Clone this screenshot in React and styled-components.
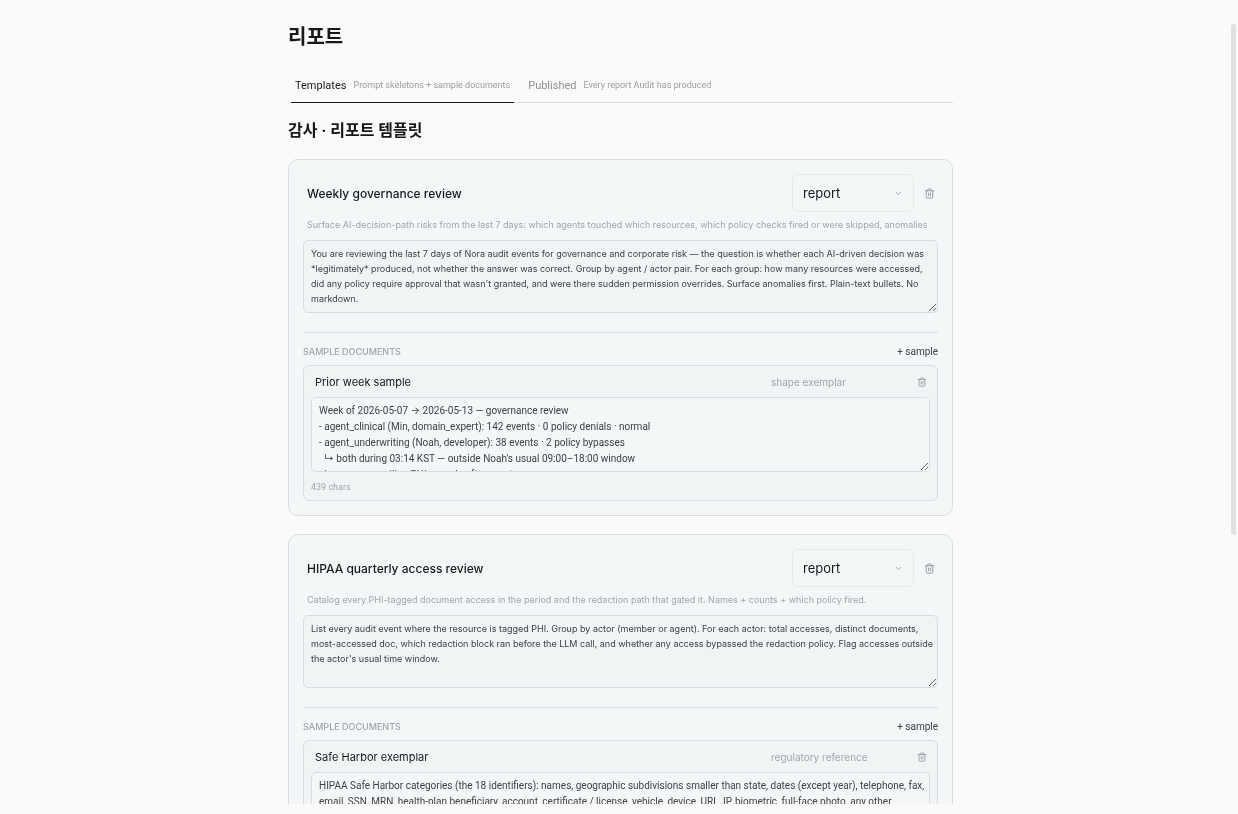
import React from 'react';
import styled, { createGlobalStyle } from 'styled-components';
import { Trash2, ChevronDown } from 'lucide-react';

const ink = '#18181b';
const muted = '#a3a5a8';
const line = '#dadddf';
const compactFont = 'Roboto, Inter, "Noto Sans CJK KR", sans-serif';

const GlobalStyle = createGlobalStyle`
* {
    box-sizing: border-box;
}
body {
    margin: 0;
    background: #fafafa;
    color: ${ink};
    font-family: Inter, "Noto Sans CJK KR", sans-serif;
}
button, input, select, textarea {
    font-family: inherit;
    color: inherit;
}
`;

const Viewport = styled.div`
height: 100vh;
padding-bottom: 10px;
`;

const Scroller = styled.main`
height: 100%;
overflow-y: auto;
scrollbar-width: none;
padding: 24px 16px 0 19px;
`;

const ScrollThumb = styled.div`
position: fixed;
top: 24px;
right: 2px;
width: 5px;
height: calc(63vh - 2px);
border-radius: 3px;
background: #e0e0e0;
`;

const Column = styled.div`
max-width: 665px;
margin: 0 auto;
`;

const PageTitle = styled.h1`
margin: 0;
font-family: ${compactFont};
font-size: 20px;
line-height: 26px;
font-weight: 700;
`;

const Tabs = styled.nav`
display: flex;
gap: 10px;
margin: 18px 0 0 3px;
border-bottom: 1px solid ${line};
`;

const Tab = styled.button`
display: flex;
align-items: center;
gap: 7px;
height: 35px;
margin-bottom: -1px;
padding: 0 4px;
border: 0;
border-bottom: 1px solid ${props => props.$active ? ink : 'transparent'};
background: none;
font-family: ${compactFont};
font-size: 11px;
color: ${props => props.$active ? ink : '#8f9194'};
`;

const TabHint = styled.span`
font-size: 9px;
color: #9b9da0;
`;

const SectionTitle = styled.h2`
margin: 16px 0;
font-family: ${compactFont};
font-size: 16px;
line-height: 24px;
font-weight: 700;
`;

const Card = styled.article`
margin-bottom: 18px;
padding: 14px;
border: 1px solid ${line};
border-radius: 10px;
background: #f4f7f8;
`;

const CardHead = styled.header`
display: flex;
align-items: center;
height: 38px;
`;

const TitleInput = styled.input`
flex: 1;
min-width: 0;
padding: 0 4px;
border: 0;
background: none;
font-size: ${props => props.$small ? '11px' : '12px'};
font-weight: ${props => props.$small ? 400 : 500};
`;

const SelectWrap = styled.div`
position: relative;
width: 122px;
height: 38px;
`;

const KindSelect = styled.select`
appearance: none;
width: 100%;
height: 100%;
padding: 0 10px;
border: 1px solid #e6e9ea;
border-radius: 6px;
background: #f4f7f8;
font-size: 13px;
`;

const Chevron = styled(ChevronDown)`
position: absolute;
top: 15px;
right: 11px;
color: #8c8f92;
pointer-events: none;
`;

const IconButton = styled.button`
display: flex;
align-items: center;
justify-content: center;
width: ${props => props.$small ? '16px' : '18px'};
height: 20px;
margin-left: ${props => props.$small ? '0' : '6px'};
padding: 0;
border: 0;
background: none;
color: #94979a;
`;

const Description = styled.input`
display: block;
width: 100%;
height: 16px;
margin: 4px 0 8px;
padding: 0 4px;
border: 0;
background: none;
font-size: 9px;
color: ${muted};
`;

const TextBox = styled.textarea`
display: block;
width: 100%;
height: 73px;
padding: 5px 2px 5px 7px;
border: 1px solid ${line};
border-radius: 5px;
background: #f1f4f5;
font-size: 9px;
line-height: 15px;
color: #3f4144;
resize: vertical;
`;

const SampleText = styled(TextBox)`
height: 75px;
background: #f4f7f8;
font-family: ${compactFont};
font-size: 10px;
line-height: 16px;
`;

const SampleHead = styled.div`
display: flex;
align-items: center;
justify-content: space-between;
height: 33px;
margin-top: 19px;
padding-top: 5px;
border-top: 1px solid ${line};
`;

const SampleLabel = styled.h3`
margin: 0;
font-size: 9px;
font-weight: 500;
color: ${muted};
`;

const AddButton = styled.button`
padding: 0;
border: 0;
background: none;
font-family: ${compactFont};
font-size: 10px;
color: #3f4144;
`;

const SampleCard = styled.section`
padding: 7px;
border: 1px solid ${line};
border-radius: 6px;
background: #f1f4f5;
`;

const SampleRow = styled.div`
display: flex;
align-items: center;
height: 18px;
margin-bottom: 6px;
`;

const PurposeInput = styled.input`
width: 147px;
padding: 0 4px;
border: 0;
background: none;
font-size: 10px;
color: ${muted};
`;

const CharCount = styled.p`
margin: 9px 0 0;
font-family: ${compactFont};
font-size: 9px;
line-height: 12px;
color: ${muted};
`;

const templates = [
    {
        name: 'Weekly governance review',
        description: 'Surface AI-decision-path risks from the last 7 days: which agents touched which resources, which policy checks fired or were skipped, anomalies',
        prompt: "You are reviewing the last 7 days of Nora audit events for governance and corporate risk — the question is whether each AI-driven decision was *legitimately* produced, not whether the answer was correct. Group by agent / actor pair. For each group: how many resources were accessed, did any policy require approval that wasn't granted, and were there sudden permission overrides. Surface anomalies first. Plain-text bullets. No markdown.",
        sample: {
            name: 'Prior week sample',
            purpose: 'shape exemplar',
            body: "Week of 2026-05-07 → 2026-05-13 — governance review\n- agent_clinical (Min, domain_expert): 142 events · 0 policy denials · normal\n- agent_underwriting (Noah, developer): 38 events · 2 policy bypasses\n  ↳ both during 03:14 KST — outside Noah's usual 09:00–18:00 window\n  ↳ one case calling PHI records after event",
            count: '439 chars',
        },
    },
    {
        name: 'HIPAA quarterly access review',
        description: 'Catalog every PHI-tagged document access in the period and the redaction path that gated it. Names + counts + which policy fired.',
        prompt: "List every audit event where the resource is tagged PHI. Group by actor (member or agent). For each actor: total accesses, distinct documents, most-accessed doc, which redaction block ran before the LLM call, and whether any access bypassed the redaction policy. Flag accesses outside the actor's usual time window.",
        sample: {
            name: 'Safe Harbor exemplar',
            purpose: 'regulatory reference',
            body: 'HIPAA Safe Harbor categories (the 18 identifiers): names, geographic subdivisions smaller than state, dates (except year), telephone, fax, email, SSN, MRN, health-plan beneficiary, account, certificate / license, vehicle, device, URL, IP, biometric, full-face photo, any other',
            count: '276 chars',
        },
    },
];

const Sample = ({ sample }) => {
    return (
        <SampleCard>
            <SampleRow>
                <TitleInput $small aria-label="Sample name" defaultValue={sample.name} />
                <PurposeInput aria-label="Sample purpose" defaultValue={sample.purpose} />
                <IconButton $small aria-label="Delete sample">
                    <Trash2 size={10} strokeWidth={2} />
                </IconButton>
            </SampleRow>
            <SampleText aria-label="Sample text" defaultValue={sample.body} />
            <CharCount>{sample.count}</CharCount>
        </SampleCard>
    )
}

const Template = ({ template }) => {
    return (
        <Card>
            <CardHead>
                <TitleInput aria-label="Template name" defaultValue={template.name} />
                <SelectWrap>
                    <KindSelect aria-label="Template kind" defaultValue="report">
                        <option value="report">report</option>
                    </KindSelect>
                    <Chevron size={9} />
                </SelectWrap>
                <IconButton aria-label="Delete template">
                    <Trash2 size={11} strokeWidth={2} />
                </IconButton>
            </CardHead>
            <Description aria-label="Description" defaultValue={template.description} />
            <TextBox aria-label="Prompt" defaultValue={template.prompt} />
            <SampleHead>
                <SampleLabel>SAMPLE DOCUMENTS</SampleLabel>
                <AddButton>+ sample</AddButton>
            </SampleHead>
            <Sample sample={template.sample} />
        </Card>
    )
}

export default function App() {
    return (
        <Viewport>
            <GlobalStyle />
            <Scroller>
                <Column>
                    <PageTitle>리포트</PageTitle>
                    <Tabs>
                        <Tab $active>
                            Templates
                            <TabHint>Prompt skeletons + sample documents</TabHint>
                        </Tab>
                        <Tab>
                            Published
                            <TabHint>Every report Audit has produced</TabHint>
                        </Tab>
                    </Tabs>
                    <SectionTitle>감사 · 리포트 템플릿</SectionTitle>
                    {templates.map((template) => (
                        <Template key={template.name} template={template} />
                    ))}
                </Column>
            </Scroller>
            <ScrollThumb />
        </Viewport>
    )
}
